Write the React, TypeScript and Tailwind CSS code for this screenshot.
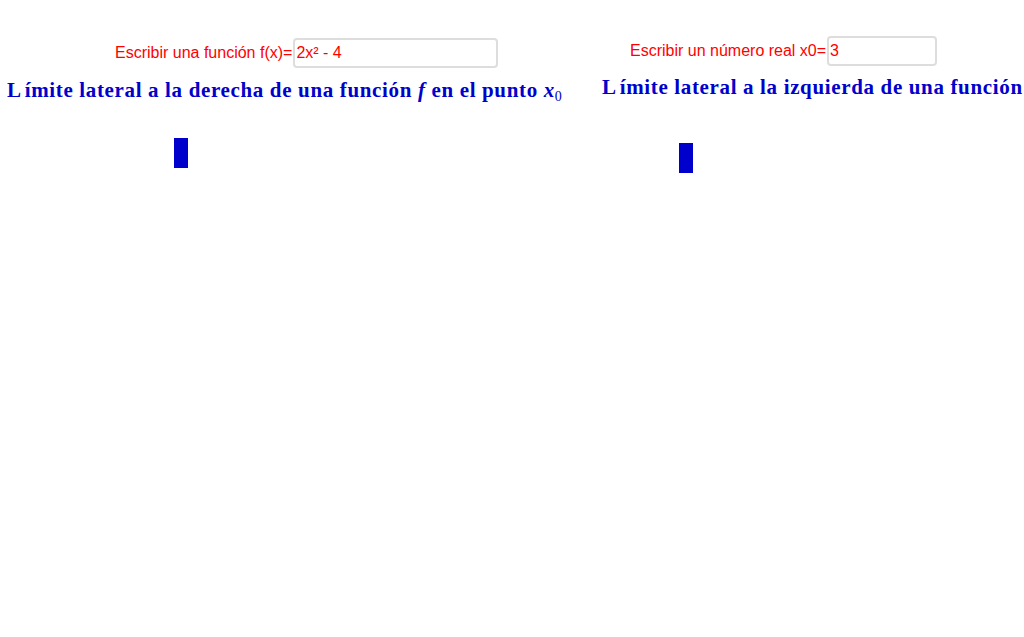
import React from "react";

const labelFont = { fontFamily: '"Liberation Sans", Arial, sans-serif' };
const titleFont = { fontFamily: '"Liberation Serif", "Times New Roman", serif' };

function Title({ side }: { side: string }) {
  return (
    <div
      className="whitespace-nowrap text-[21px] font-bold leading-[21px] tracking-[0.65px] text-[#0000cc]"
      style={titleFont}
    >
      L<span className="ml-[3px]">ímite lateral a la {side} de una función </span>
      <i>f</i> en el punto <i>x</i>
      <sub className="text-[14px] font-normal">0</sub>
    </div>
  );
}

function InputRow({ label, value, width }: { label: string; value: string; width: string }) {
  return (
    <div className="flex items-center" style={labelFont}>
      <span className="text-[16px] text-[#ff0000]">{label}</span>
      <div
        className={`ml-px flex h-[30px] items-center rounded-[4px] border-2 border-[#dddddd] bg-white pl-[1px] text-[16px] text-[#ff0000] ${width}`}
      >
        {value}
      </div>
    </div>
  );
}

export default function App() {
  return (
    <div className="flex h-[637px] w-[1024px] overflow-hidden bg-white pl-[7px]">
      <div className="flex w-[595px] shrink-0 flex-col">
        <div className="pl-[108px] pt-[38px]">
          <InputRow label="Escribir una función f(x)=" value="2x² - 4" width="w-[205px]" />
        </div>
        <div className="mt-[12px]">
          <Title side="derecha" />
        </div>
        <div className="ml-[167px] mt-[37px] h-[30px] w-[14px] bg-[#0000cc]" />
      </div>
      <div className="flex shrink-0 flex-col">
        <div className="pl-[28px] pt-[36px]">
          <InputRow label="Escribir un número real x0=" value="3" width="w-[110px]" />
        </div>
        <div className="mt-[11px]">
          <Title side="izquierda" />
        </div>
        <div className="ml-[77px] mt-[45px] h-[30px] w-[14px] bg-[#0000cc]" />
      </div>
    </div>
  );
}
